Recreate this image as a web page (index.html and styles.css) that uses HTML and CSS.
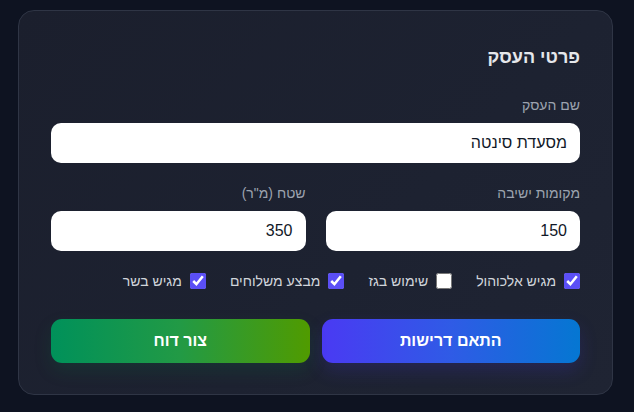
FILE: index.html
```html
<!DOCTYPE html>
<html lang="he" dir="rtl">
<head>
<meta charset="utf-8">
<link rel="stylesheet" href="styles.css">
</head>
<body>
<div class="page">
  <section class="card">
    <h2 class="title">פרטי העסק</h2>
    <div class="field">
      <label class="label">שם העסק</label>
      <input class="input" type="text" value="מסעדת סינטה">
    </div>
    <div class="row">
      <div class="field">
        <label class="label">מקומות ישיבה</label>
        <input class="input" type="text" value="150">
      </div>
      <div class="field">
        <label class="label">שטח (מ"ר)</label>
        <input class="input" type="text" value="350">
      </div>
    </div>
    <div class="checks">
      <label class="check"><input type="checkbox" checked><span>מגיש אלכוהול</span></label>
      <label class="check"><input type="checkbox"><span>שימוש בגז</span></label>
      <label class="check"><input type="checkbox" checked><span>מבצע משלוחים</span></label>
      <label class="check"><input type="checkbox" checked><span>מגיש בשר</span></label>
    </div>
    <div class="buttons">
      <button class="btn btn-blue">התאם דרישות</button>
      <button class="btn btn-green">צור דוח</button>
    </div>
  </section>
</div>
</body>
</html>
```
FILE: styles.css
```css
* { box-sizing: border-box; }
html, body { margin: 0; padding: 0; }
body {
  background: #0e1321;
  font-family: "Liberation Sans", Arial, sans-serif;
  width: 634px;
  height: 412px;
  overflow: hidden;
}
.page {
  padding: 10px 21px 0 18px;
}
.card {
  width: 595px;
  height: 385px;
  background: linear-gradient(135deg, #1b1f2d 0%, #1d2231 60%, #1f2433 100%);
  border: 1px solid #2f3545;
  border-radius: 16px;
  padding: 32px;
  display: flex;
  flex-direction: column;
}
.title {
  margin: 0 0 24px 0;
  font-size: 18px;
  line-height: 28px;
  font-weight: 700;
  color: #e5e7eb;
}
.field {
  display: flex;
  flex-direction: column;
  gap: 8px;
}
.label {
  font-size: 14px;
  line-height: 20px;
  color: #9ca3af;
}
.input {
  height: 40px;
  border: none;
  border-radius: 10px;
  background: #ffffff;
  padding: 0 13px;
  font-family: "Liberation Sans", Arial, sans-serif;
  font-size: 16px;
  color: #111827;
  direction: rtl;
  outline: none;
}
.row {
  margin-top: 20px;
  display: grid;
  grid-template-columns: 1fr 1fr;
  gap: 20px;
}
.checks {
  margin-top: 20px;
  display: flex;
  gap: 24px;
  height: 20px;
  align-items: center;
}
.check {
  display: flex;
  align-items: center;
  gap: 8px;
  font-size: 14px;
  line-height: 20px;
  color: #d1d5db;
}
.check input {
  margin: 0;
  width: 16px;
  height: 16px;
  accent-color: #5b4ff6;
}
.buttons {
  margin-top: 28px;
  display: grid;
  grid-template-columns: 1fr 1fr;
  gap: 12px;
}
.btn {
  height: 44px;
  border: none;
  border-radius: 11px;
  color: #ffffff;
  font-family: "Liberation Sans", Arial, sans-serif;
  font-size: 16px;
  font-weight: 700;
}
.btn-blue {
  background: linear-gradient(to right, #4a3af3 0%, #2f5be6 50%, #0577d2 100%);
  box-shadow: 0 8px 18px rgba(70, 58, 240, 0.18);
}
.btn-green {
  background: linear-gradient(to right, #00915a 0%, #229a45 50%, #509b00 100%);
  box-shadow: 0 8px 18px rgba(10, 140, 70, 0.15);
}
```
